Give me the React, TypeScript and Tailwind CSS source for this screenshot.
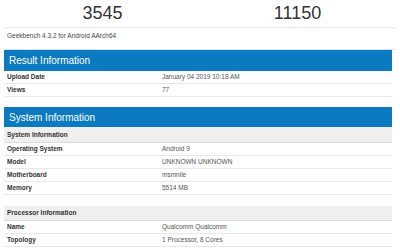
import React from 'react';

type Row = { label: string; value: string };

const resultRows: Row[] = [
  { label: 'Upload Date', value: 'January 04 2019 10:18 AM' },
  { label: 'Views', value: '77' },
];

const systemRows: Row[] = [
  { label: 'Operating System', value: 'Android 9' },
  { label: 'Model', value: 'UNKNOWN UNKNOWN' },
  { label: 'Motherboard', value: 'msmnile' },
  { label: 'Memory', value: '5514 MB' },
];

const processorRows: Row[] = [
  { label: 'Name', value: 'Qualcomm Qualcomm' },
  { label: 'Topology', value: '1 Processor, 8 Cores' },
];

const SectionHeader = ({ title, h }: { title: string; h: string }) => (
  <div className={`${h} bg-[#0b7ac0] text-white text-[10px] pl-[5px] flex items-center`}>{title}</div>
);

const SubHeader = ({ title, h }: { title: string; h: string }) => (
  <div className={`${h} bg-[#efefef] border-b border-[#dcdcdc] flex items-center pl-[3px] text-[6.5px] font-bold text-[#333]`}>
    {title}
  </div>
);

const InfoRows = ({ rows }: { rows: Row[] }) => (
  <div>
    {rows.map((r) => (
      <div key={r.label} className="h-[13px] border-b border-[#e8e8e8] flex items-center text-[6.5px]">
        <div className="w-[158px] pl-[3px] font-bold text-[#333]">{r.label}</div>
        <div className="text-[#555]">{r.value}</div>
      </div>
    ))}
  </div>
);

export default function App() {
  return (
    <div className="w-[400px] h-[250px] overflow-hidden bg-white font-['Liberation_Sans',Arial,sans-serif]">
      <div className="mx-[5px] h-[28px] pt-[2px] flex border-b border-[#e6e6e6] text-[#333] text-[18px] leading-[22px]">
        <div className="flex-1 text-center">3545</div>
        <div className="flex-1 text-center">11150</div>
      </div>
      <div className="mx-[5px] h-[22px] pt-[4px] border-b border-[#cde7f5] text-[6.5px] leading-[8px] text-[#444] pl-[2px]">
        Geekbench 4.3.2 for Android AArch64
      </div>
      <div className="ml-[4px] w-[388px]">
        <SectionHeader title="Result Information" h="h-[21px]" />
        <InfoRows rows={resultRows} />
        <div className="mt-[10px]">
          <SectionHeader title="System Information" h="h-[20px]" />
          <SubHeader title="System Information" h="h-[16px]" />
          <InfoRows rows={systemRows} />
        </div>
        <div className="mt-[11px]">
          <SubHeader title="Processor Information" h="h-[15px]" />
          <InfoRows rows={processorRows} />
        </div>
      </div>
    </div>
  );
}
